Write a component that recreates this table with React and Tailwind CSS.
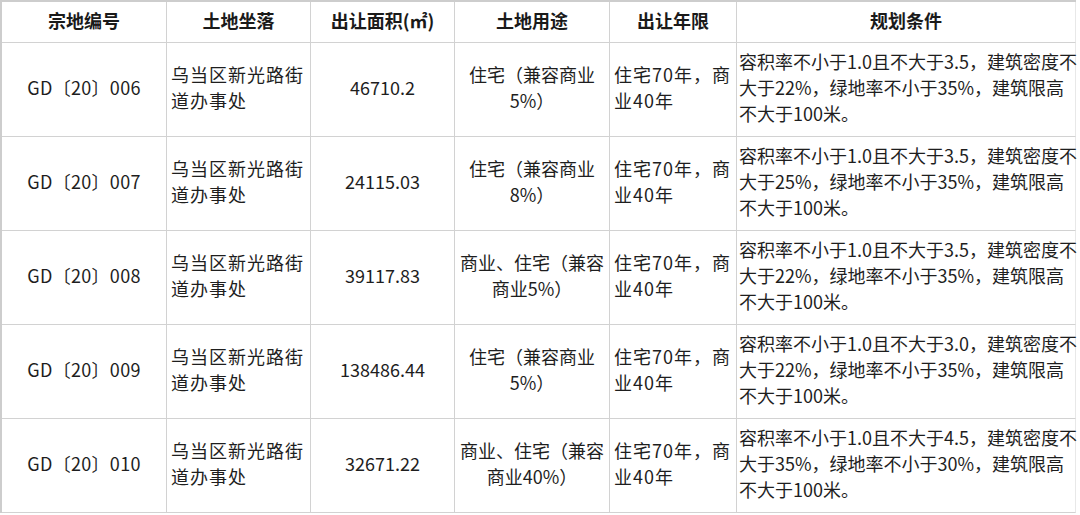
import React from "react";

const rows = [
  {
    id: "GD〔20〕006",
    area: "46710.2",
    use: ["住宅（兼容商业", "5%）"],
    cond: ["容积率不小于1.0且不大于3.5，建筑密度不", "大于22%，绿地率不小于35%，建筑限高", "不大于100米。"],
  },
  {
    id: "GD〔20〕007",
    area: "24115.03",
    use: ["住宅（兼容商业", "8%）"],
    cond: ["容积率不小于1.0且不大于3.5，建筑密度不", "大于25%，绿地率不小于35%，建筑限高", "不大于100米。"],
  },
  {
    id: "GD〔20〕008",
    area: "39117.83",
    use: ["商业、住宅（兼容", "商业5%）"],
    cond: ["容积率不小于1.0且不大于3.5，建筑密度不", "大于22%，绿地率不小于35%，建筑限高", "不大于100米。"],
  },
  {
    id: "GD〔20〕009",
    area: "138486.44",
    use: ["住宅（兼容商业", "5%）"],
    cond: ["容积率不小于1.0且不大于3.0，建筑密度不", "大于22%，绿地率不小于35%，建筑限高", "不大于100米。"],
  },
  {
    id: "GD〔20〕010",
    area: "32671.22",
    use: ["商业、住宅（兼容", "商业40%）"],
    cond: ["容积率不小于1.0且不大于4.5，建筑密度不", "大于35%，绿地率不小于30%，建筑限高", "不大于100米。"],
  },
];

const headers = ["宗地编号", "土地坐落", "出让面积(㎡)", "土地用途", "出让年限", "规划条件"];

function Lines({ lines }) {
  return lines.map((l, i) => (
    <div key={i} className="whitespace-nowrap">
      {l}
    </div>
  ));
}

export default function App() {
  const cell = "border-r border-b border-[#d2d2d2] flex flex-col justify-center pb-[6px]";
  return (
    <div
      className="w-[1080px] h-[515px] bg-white overflow-hidden text-[#1e1e1e] text-[18px] leading-[26px]"
      style={{ fontFamily: '"Noto Sans CJK SC", "Noto Sans", sans-serif' }}
    >
      <div className="border-l-2 border-t-2 border-[#cdcdcd] w-[1076px] grid grid-cols-[165px_144px_144px_155px_127px_339px] grid-rows-[41px_94px_94px_94px_94px_94px]">
        {headers.map((h, i) => (
          <div
            key={h}
            className={`border-r border-b border-[#d2d2d2] flex flex-col justify-center pb-[4px] items-center font-bold text-[18px] text-[#1a1a1a] ${i === 5 ? "border-r-[#e8e8e8]" : ""}`}
          >
            {h}
          </div>
        ))}
        {rows.map((r, ri) => (
          <React.Fragment key={ri}>
            <div className={`${cell} items-center tracking-[0.3px]`}>{r.id}</div>
            <div className={`${cell} items-start pl-[4px] tracking-[1px]`}>
              <Lines lines={["乌当区新光路街", "道办事处"]} />
            </div>
            <div className={`${cell} items-center`}>{r.area}</div>
            <div className={`${cell} items-center text-center`}>
              <Lines lines={r.use} />
            </div>
            <div className={`${cell} items-start pl-[4px] tracking-[1px]`}>
              <Lines lines={["住宅70年，商", "业40年"]} />
            </div>
            <div className={`${cell} items-start pl-[2px] border-r-[#e8e8e8]`}>
              <Lines lines={r.cond} />
            </div>
          </React.Fragment>
        ))}
      </div>
    </div>
  );
}
